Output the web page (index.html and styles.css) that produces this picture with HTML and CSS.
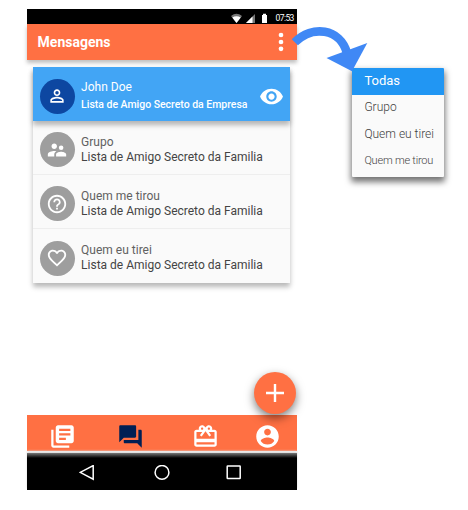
FILE: index.html
```html
<!DOCTYPE html>
<html lang="pt">
<head>
<meta charset="utf-8">
<title>Mensagens</title>
<link rel="stylesheet" href="styles.css">
</head>
<body>
<main class="stage">
  <section class="phone">
    <div class="status">
      <svg class="status-icons" width="38" height="12" viewBox="0 0 38 12">
        <path fill="#777" d="M0 4Q5.500-.500 11 4L5.500 11z"/>
        <path fill="#fff" d="M1.300 5.500Q5.500 3.200 9.700 5.500L5.500 11z"/>
        <path fill="#777" d="M15 11L24 2V11z"/>
        <path fill="#fff" d="M15 11L21.500 4.500V11z"/>
        <path fill="#fff" d="M31 3h1V1.800h3V3h1v8h-5z"/>
      </svg>
      <span class="clock">07:53</span>
    </div>
    <header class="appbar">
      <h1>Mensagens</h1>
      <svg class="more" width="6" height="20" viewBox="0 0 6 20" fill="#fff"><circle cx="3" cy="3" r="2.350"/><circle cx="3" cy="10" r="2.350"/><circle cx="3" cy="16.800" r="2.350"/></svg>
    </header>
    <ul class="list">
      <li class="item active">
        <span class="avatar"><svg width="20" height="20" viewBox="0 0 24 24"><path d="M12 5.900a2.100 2.100 0 1 1 0 4.200 2.100 2.100 0 0 1 0-4.200m0 9c2.970 0 6.100 1.460 6.100 2.100v1.100H5.900V17c0-.640 3.130-2.100 6.100-2.100M12 4C9.790 4 8 5.790 8 8s1.790 4 4 4 4-1.790 4-4-1.790-4-4-4zm0 9c-2.670 0-8 1.340-8 4v3h16v-3c0-2.660-5.330-4-8-4z"/></svg></span>
        <div class="copy"><p class="name">John Doe</p><p class="desc">Lista de Amigo Secreto da Empresa</p></div>
        <svg class="eye" width="25" height="25" viewBox="0 0 24 24"><path d="M12 4.500C7 4.500 2.730 7.610 1 12c1.730 4.390 6 7.500 11 7.500s9.270-3.110 11-7.500c-1.730-4.390-6-7.500-11-7.500zM12 17c-2.760 0-5-2.240-5-5s2.240-5 5-5 5 2.240 5 5-2.240 5-5 5zm0-8c-1.660 0-3 1.340-3 3s1.340 3 3 3 3-1.340 3-3-1.340-3-3-3z"/></svg>
      </li>
      <li class="item">
        <span class="avatar"><svg width="22" height="22" viewBox="0 0 24 24"><path d="M16.500 12a2.500 2.500 0 1 0 0-5 2.500 2.500 0 0 0 0 5zM9 11c1.660 0 2.990-1.340 2.990-3S10.660 5 9 5 6 6.340 6 8s1.340 3 3 3zm7.500 3c-1.830 0-5.500.920-5.500 2.750V19h11v-2.250c0-1.830-3.670-2.750-5.500-2.750zM9 13c-2.330 0-7 1.170-7 3.500V19h7v-2.250c0-.850.330-2.340 2.370-3.470C10.500 13.100 9.660 13 9 13z"/></svg></span>
        <div class="copy"><p class="name">Grupo</p><p class="desc">Lista de Amigo Secreto da Familia</p></div>
      </li>
      <li class="item">
        <span class="avatar"><svg width="22" height="22" viewBox="0 0 24 24"><path d="M11 18h2v-2h-2v2zm1-16C6.480 2 2 6.480 2 12s4.480 10 10 10 10-4.480 10-10S17.520 2 12 2zm0 18c-4.410 0-8-3.590-8-8s3.590-8 8-8 8 3.590 8 8-3.590 8-8 8zm0-14c-2.210 0-4 1.790-4 4h2c0-1.100.900-2 2-2s2 .900 2 2c0 2-3 1.750-3 5h2c0-2.250 3-2.500 3-5 0-2.210-1.790-4-4-4z"/></svg></span>
        <div class="copy"><p class="name">Quem me tirou</p><p class="desc">Lista de Amigo Secreto da Familia</p></div>
      </li>
      <li class="item">
        <span class="avatar"><svg width="22" height="22" viewBox="0 0 24 24"><path d="M16.500 3c-1.740 0-3.410.810-4.500 2.090C10.910 3.810 9.240 3 7.500 3 4.420 3 2 5.420 2 8.500c0 3.780 3.400 6.860 8.550 11.540L12 21.350l1.450-1.320C18.600 15.360 22 12.280 22 8.500 22 5.420 19.580 3 16.500 3zm-4.400 15.550l-.100.100-.100-.100C7.140 14.240 4 11.390 4 8.500 4 6.500 5.500 5 7.500 5c1.540 0 3.040.990 3.570 2.360h1.870C13.460 5.990 14.960 5 16.500 5c2 0 3.500 1.500 3.500 3.500 0 2.890-3.140 5.740-7.900 10.050z"/></svg></span>
        <div class="copy"><p class="name">Quem eu tirei</p><p class="desc">Lista de Amigo Secreto da Familia</p></div>
      </li>
    </ul>
    <nav class="tabs">
      <svg width="27" height="27" viewBox="0 0 24 24"><path d="M4 6H2v14c0 1.100.900 2 2 2h14v-2H4V6zm16-4H8c-1.100 0-2 .900-2 2v12c0 1.100.900 2 2 2h12c1.100 0 2-.900 2-2V4c0-1.100-.900-2-2-2zm-1 9H9V9h10v2zm-4 4H9v-2h6v2zm4-8H9V5h10v2z"/></svg>
      <svg class="current" width="27" height="27" viewBox="0 0 24 24"><path d="M21 6h-2v9H6v2c0 .550.450 1 1 1h11l4 4V7c0-.550-.450-1-1-1zm-4 6V3c0-.550-.450-1-1-1H3c-.550 0-1 .450-1 1v14l4-4h10c.550 0 1-.450 1-1z"/></svg>
      <svg width="27" height="27" viewBox="0 0 24 24"><path d="M20 6h-2.180c.110-.310.180-.650.180-1 0-1.660-1.340-3-3-3-1.050 0-1.960.540-2.500 1.350l-.500.670-.500-.680C10.960 2.540 10.050 2 9 2 7.340 2 6 3.340 6 5c0 .350.070.690.180 1H4c-1.110 0-1.990.890-1.990 2L2 19c0 1.110.890 2 2 2h16c1.110 0 2-.890 2-2V8c0-1.110-.890-2-2-2zm-5-2c.550 0 1 .450 1 1s-.450 1-1 1-1-.450-1-1 .450-1 1-1zM9 4c.550 0 1 .450 1 1s-.450 1-1 1-1-.450-1-1 .450-1 1-1zm11 15H4v-2h16v2zm0-5H4V8h5.080L7 10.830 8.620 12 11 8.760l1-1.360 1 1.360L15.380 12 17 10.830 14.920 8H20v6z"/></svg>
      <svg width="27" height="27" viewBox="0 0 24 24"><path d="M12 2C6.480 2 2 6.480 2 12s4.480 10 10 10 10-4.480 10-10S17.520 2 12 2zm0 3c1.660 0 3 1.340 3 3s-1.340 3-3 3-3-1.340-3-3 1.340-3 3-3zm0 14.200c-2.500 0-4.710-1.280-6-3.220.030-1.990 4-3.080 6-3.080 1.990 0 5.970 1.090 6 3.080-1.290 1.940-3.500 3.220-6 3.220z"/></svg>
    </nav>
    <div class="system">
      <svg width="16" height="16" viewBox="0 0 16 16"><path d="M14.200.600V14.200L1.200 7.400z"/></svg>
      <svg width="16" height="16" viewBox="0 0 16 16"><circle cx="8" cy="7.400" r="6.900"/></svg>
      <svg width="16" height="16" viewBox="0 0 16 16"><rect x="1.200" y="1" width="13" height="12.600" rx=".5"/></svg>
    </div>
    <button class="fab" aria-label="+"><svg width="18" height="18" viewBox="0 0 18 18"><path d="M9 0V18M0 9H18" stroke="#fff" stroke-width="2.400"/></svg></button>
  </section>
  <ul class="menu">
    <li class="selected">Todas</li>
    <li class="m-group">Grupo</li>
    <li class="m-mine">Quem eu tirei</li>
    <li class="m-who">Quem me tirou</li>
  </ul>
  <svg class="arrow" width="78" height="48" viewBox="0 0 78 48"><path d="M4.800 18.300C22 1 50 4 57 29" fill="none" stroke="#4088f5" stroke-width="8.700"/><path d="M36.500 34L77.300 19L62 47.200z" fill="#4088f5"/></svg>
</main>
</body>
</html>
```
FILE: styles.css
```css
* { box-sizing: border-box; }
body { margin: 0; background: #fff; font-family: Roboto, sans-serif; }
h1, p, ul { margin: 0; padding: 0; }
ul { list-style: none; }
svg { display: block; flex: none; }
.stage { position: relative; display: flex; align-items: flex-start; gap: 55.3px; width: 468px; height: 510px; padding: 9px 0 0 26.6px; }
.phone { position: relative; display: flex; flex-direction: column; flex: none; width: 270px; height: 481px; }
.status { display: flex; justify-content: flex-end; align-items: center; gap: 7px; height: 15px; padding: 3px 2px 0 0; background: #000; }
.clock { width: 19px; color: #fff; font-size: 8.5px; line-height: 12px; letter-spacing: -.6px; white-space: nowrap; font-weight: 400; }
.appbar { display: flex; justify-content: space-between; align-items: center; height: 36px; padding: 0 13px 1px 11px; background: #ff7043; box-shadow: 0 3px 4px rgba(0,0,0,.25); }
h1 { color: #fff; font-size: 14px; line-height: 18px; font-weight: 700; }
.list { width: 257px; margin: 7px 0 0 6px; background: #fafafa; box-shadow: 0 4px 5px rgba(0,0,0,.28); }
.item { display: flex; align-items: center; height: 54px; padding: 4px 6px 0 7px; border-bottom: 1px solid #eee; color: #444; }
.item:last-child { border-bottom: 0; }
.item.active { position: relative; border-bottom: 0; background: #42a5f5; color: #fff; box-shadow: 0 4px 5px rgba(0,0,0,.28); }
.avatar { display: flex; align-items: center; justify-content: center; flex: none; width: 35px; height: 35px; border-radius: 50%; background: #9e9e9e; }
.active .avatar { background: #0d47a1; }
.avatar svg, .eye { fill: #fff; }
.copy { flex: 1; margin-left: 6.500px; white-space: nowrap; }
.name, .desc { font-size: 12px; line-height: 15px; }
.name { color: #616161; }
.active .name { color: #fff; line-height: 17px; }
.active .desc { font-size: 10.5px; line-height: 17px; font-weight: 500; letter-spacing: -.02px; }
.tabs { display: grid; grid-template-columns: 72px 64px 86px 37px; justify-items: center; align-items: center; height: 36px; margin-top: auto; padding-top: 6px; background: #ff7043; fill: #fff; }
.tabs .current { fill: #001f54; }
.system { display: flex; align-items: center; gap: 59px; height: 37px; margin-top: 2px; padding: 2px 0 0 52.400px; background: linear-gradient(#777, #000 5px); box-shadow: 0 -2px 2px #ddd; }
.system svg { fill: none; stroke: #fff; stroke-width: 1.500; }
.system svg:last-child { margin-left: -3px; }
.fab { position: absolute; left: 227.400px; top: 363px; display: grid; place-items: center; width: 42px; height: 42px; padding: 0; border: 0; border-radius: 50%; background: #ff7043; box-shadow: 0 4px 10px rgba(0,0,0,.5); }
.menu { width: 92px; height: 109px; margin-top: 59px; border-radius: 1px; overflow: hidden; background: #fafafa; box-shadow: 0 4px 6px 1px rgba(0,0,0,.55); color: #424242; font-size: 12px; font-weight: 300; white-space: nowrap; }
.menu li { height: 27px; padding-left: 12.500px; line-height: 24px; }
.menu .selected { background: #2196f3; color: #fff; font-size: 13px; font-weight: 400; line-height: 26px; }
.menu .m-who { font-size: 11px; letter-spacing: -.22px; }
.arrow { position: absolute; left: 290px; top: 24px; }
```
